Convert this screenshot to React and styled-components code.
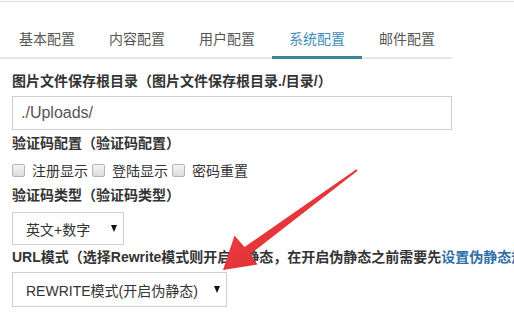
import React from "react";
import styled, { createGlobalStyle } from "styled-components";

const GlobalStyle = createGlobalStyle`
  html, body {
    margin: 0;
    padding: 0;
    background: #ffffff;
    overflow: hidden;
  }
  body {
    font-family: "Liberation Sans", "Noto Sans CJK SC", sans-serif;
    font-size: 14px;
    color: #333333;
  }
`;

const tabs = ["基本配置", "内容配置", "用户配置", "系统配置", "邮件配置"];
const checks = ["注册显示", "登陆显示", "密码重置"];

const Page = styled.div`
  position: relative;
  width: 514px;
  height: 312px;
  overflow: hidden;
  border-top: 1px solid #dedede;
  margin-top: 1px;
  box-sizing: border-box;
`;

const TabBar = styled.div`
  display: flex;
  width: 450px;
  margin-top: 20px;
  padding-left: 2px;
  border-bottom: 2px solid #e6e6e6;
`;

const Tab = styled.div`
  width: 90px;
  height: 34px;
  line-height: 34px;
  text-align: center;
  font-size: 14px;
  color: ${(p) => (p.$active ? "#3f8dba" : "#555555")};
  border-bottom: 3px solid ${(p) => (p.$active ? "#3a8599" : "transparent")};
  margin-bottom: -2px;
`;

const Form = styled.div`
  padding: 0 12px;
  white-space: nowrap;
`;

const Label = styled.div`
  font-weight: bold;
  line-height: 20px;
  height: 20px;
  margin-top: ${(p) => p.$top}px;
  color: #333333;
`;

const Link = styled.span`
  color: #2f6ea8;
`;

const TextInput = styled.div`
  margin-top: 5px;
  width: 440px;
  height: 34px;
  box-sizing: border-box;
  border: 1px solid #cfcfcf;
  padding-left: 8px;
  font-size: 16px;
  line-height: 32px;
  color: #555555;
`;

const CheckRow = styled.div`
  display: flex;
  align-items: center;
  margin-top: 7px;
  height: 20px;
`;

const Check = styled.span`
  width: 11px;
  height: 11px;
  border: 1px solid #b5b5b5;
  border-radius: 2px;
  background: linear-gradient(#f4f4f4, #dcdcdc);
  margin-right: 7px;
`;

const CheckText = styled.span`
  margin-right: 4px;
  color: #333333;
`;

const Select = styled.div`
  display: flex;
  align-items: center;
  justify-content: space-between;
  margin-top: ${(p) => p.$top}px;
  width: ${(p) => p.$width}px;
  height: ${(p) => p.$height}px;
  box-sizing: border-box;
  border: 1px solid #cfcfcf;
  padding: 0 6px 0 13px;
  color: #333333;
`;

const Caret = styled.span`
  width: 0;
  height: 0;
  border-left: 3px solid transparent;
  border-right: 3px solid transparent;
  border-top: 7px solid #111111;
`;

const ArrowLayer = styled.svg`
  position: absolute;
  left: 0;
  top: 0;
  pointer-events: none;
`;

const App = () => {
  return (
    <>
      <GlobalStyle />
      <Page>
        <TabBar>
          {tabs.map((t) => (
            <Tab key={t} $active={t === "系统配置"}>
              {t}
            </Tab>
          ))}
        </TabBar>
        <Form>
          <Label $top={12}>图片文件保存根目录（图片文件保存根目录./目录/）</Label>
          <TextInput>./Uploads/</TextInput>
          <Label $top={3}>验证码配置（验证码配置）</Label>
          <CheckRow>
            {checks.map((c) => (
              <React.Fragment key={c}>
                <Check />
                <CheckText>{c}</CheckText>
              </React.Fragment>
            ))}
          </CheckRow>
          <Label $top={5}>验证码类型（验证码类型）</Label>
          <Select $top={7} $width={112} $height={33}>
            <span>英文+数字</span>
            <Caret />
          </Select>
          <Label $top={2}>
            URL模式（选择Rewrite模式则开启伪静态，在开启伪静态之前需要先<Link>设置伪静态规则</Link>）
          </Label>
          <Select $top={5} $width={215} $height={35}>
            <span>REWRITE模式(开启伪静态)</span>
            <Caret />
          </Select>
        </Form>
        {/* red annotation arrow */}
        <ArrowLayer width="514" height="312" viewBox="0 0 514 312">
          <defs>
            <linearGradient id="arrowFill" x1="0" y1="0" x2="1" y2="1">
              <stop offset="0" stopColor="#f0474a" />
              <stop offset="1" stopColor="#d9262b" />
            </linearGradient>
          </defs>
          <polygon
            points="357.6,168.8 250.5,252.0 257.5,262.5 223,268 234.5,233.5 244.5,245 356.4,167.2"
            fill="url(#arrowFill)"
          />
        </ArrowLayer>
      </Page>
    </>
  );
};

export default App;
